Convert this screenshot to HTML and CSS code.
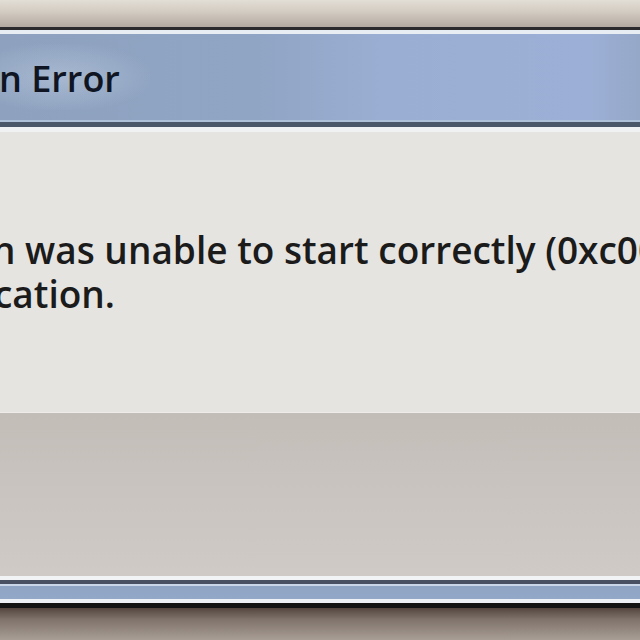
FILE: index.html
```html
<!DOCTYPE html>
<html>
<head>
<meta charset="utf-8">
<link rel="stylesheet" href="styles.css">
</head>
<body>
<div class="screen">
  <div class="frame-top"></div>
  <div class="frame-top-line"></div>
  <div class="title-hl"></div>
  <div class="titlebar">
    <div class="title-glow"></div>
    <span class="title-text">n Error</span>
  </div>
  <div class="title-line-a"></div>
  <div class="title-line-b"></div>
  <div class="title-line-c"></div>
  <div class="content">
    <div class="msg msg-1">n was unable to start correctly (0xc000007b). Click OK to close the</div>
    <div class="msg msg-2">cation.</div>
  </div>
  <div class="footer"></div>
  <div class="bf-white"></div>
  <div class="bf-dark"></div>
  <div class="bf-light"></div>
  <div class="bf-blue"></div>
  <div class="bf-white2"></div>
  <div class="bf-black"></div>
  <div class="frame-bottom"></div>
</div>
</body>
</html>
```

FILE: styles.css
```css
html, body {
  margin: 0;
  padding: 0;
  width: 640px;
  height: 640px;
  overflow: hidden;
  background: #c8c3be;
}
.screen {
  width: 640px;
  height: 640px;
  overflow: hidden;
  display: flex;
  flex-direction: column;
  font-family: "Open Sans", "Noto Sans", sans-serif;
}
.screen > div { flex: none; }
.frame-top {
  height: 27px;
  background: linear-gradient(to bottom, #e2ddd5 0%, #d2cbc2 45%, #b3a9a1 100%);
}
.frame-top-line { height: 3px; background: #2a2a2c; }
.title-hl { height: 4px; background: #e8edf4; }
.titlebar {
  height: 86px;
  position: relative;
  background: linear-gradient(to right, #8ea2bf 0%, #90a5c4 40%, #9aaed3 60%, #9cafd6 92%, #95a8c8 100%);
  padding-top: 25px;
  box-sizing: border-box;
}
.title-glow {
  position: absolute;
  left: 0;
  top: 10px;
  width: 150px;
  height: 66px;
  background: radial-gradient(ellipse at 40% 50%, rgba(215,224,236,0.35) 0%, rgba(190,204,224,0.18) 50%, rgba(160,178,205,0) 75%);
}
.title-text {
  position: relative;
  display: block;
  margin-left: -1px;
  font-size: 36px;
  font-weight: 600;
  line-height: 40px;
  color: #0f1522;
  white-space: nowrap;
}
.title-line-a { height: 2px; background: #aebfd8; }
.title-line-b { height: 5px; background: #4c5669; }
.title-line-c { height: 5px; background: #eff1f3; }
.content {
  height: 280px;
  background: #e6e4e1;
  padding-top: 96px;
  box-sizing: border-box;
  overflow: hidden;
}
.msg {
  font-size: 37px;
  font-weight: 600;
  line-height: 44px;
  color: #1b1b1b;
  white-space: nowrap;
}
.msg-1 { margin-left: -8px; }
.msg-2 { margin-left: -6px; }
.footer {
  height: 164px;
  background: linear-gradient(to bottom, #c3bdb8 0%, #c8c3be 40%, #cfcac5 100%);
  border-top: 1px solid #eeece9;
  box-sizing: border-box;
}
.bf-white { height: 4px; background: #f1f3f5; }
.bf-dark { height: 4px; background: #485061; }
.bf-light { height: 2px; background: #c9d6ea; }
.bf-blue { height: 13px; background: linear-gradient(to bottom, #8fa3c3, #93a7c8); }
.bf-white2 { height: 4px; background: #eef1f5; }
.bf-black { height: 5px; background: #141414; }
.frame-bottom {
  height: 32px;
  background: linear-gradient(to bottom, #54463e 0%, #7e726a 35%, #a99e96 100%);
}
```
